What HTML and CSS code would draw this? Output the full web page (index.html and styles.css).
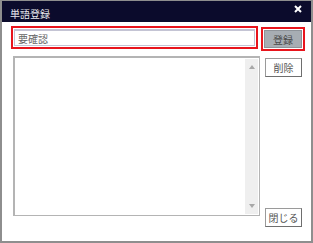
FILE: index.html
```html
<!DOCTYPE html>
<html lang="ja">
<head>
  <meta charset="UTF-8">
  <title>単語登録</title>
  <link rel="stylesheet" href="styles.css">
</head>
<body>
  <div class="window">
    <div class="titlebar">
      <span class="title">単語登録</span>
      <svg class="close-x" width="8" height="8" viewBox="0 0 8 8">
        <path d="M1 1 L7 7 M7 1 L1 7" stroke="#fff" stroke-width="2"/>
      </svg>
    </div>
    <div class="content">
      <div class="top-row">
        <div class="field-wrap">
          <div class="field">要確認</div>
        </div>
        <div class="btn-wrap">
          <button class="btn btn-register">登録</button>
        </div>
      </div>
      <div class="main-row">
        <div class="listbox">
          <div class="list-area"></div>
          <div class="scrollbar">
            <span class="arrow up"></span>
            <span class="arrow down"></span>
          </div>
        </div>
        <div class="side">
          <button class="btn">削除</button>
          <button class="btn">閉じる</button>
        </div>
      </div>
    </div>
  </div>
</body>
</html>
```

FILE: styles.css
```css
/* Dialog window */
body {
  margin: 0;
  background: #fff;
  font-family: "Noto Sans CJK JP", "Noto Sans", sans-serif;
}

.window {
  width: 313px;
  height: 243px;
  box-sizing: border-box;
  border: 2px solid #8e8e8e;
  border-top-width: 1px;
  background: #fff;
  display: flex;
  flex-direction: column;
}

.titlebar {
  height: 21px;
  background: #0b0b2c;
  display: flex;
  align-items: center;
  justify-content: space-between;
  padding: 0 9px 0 8px;
  flex-shrink: 0;
}

.title {
  color: #e8e8ee;
  font-size: 10px;
  margin-top: 4px;
}

.close-x {
  margin-top: -6px;
}

.content {
  padding: 4px 0 0 9px;
}

.top-row {
  display: flex;
  align-items: flex-start;
}

.field-wrap {
  width: 247px;
  height: 23px;
  box-sizing: border-box;
  border: 2px solid #e8141c;
  padding: 1px;
}

.field {
  height: 100%;
  box-sizing: border-box;
  border: 1px solid #c4c4d4;
  border-top-width: 2px;
  font-size: 10px;
  line-height: 15px;
  color: #666;
  padding-left: 3px;
}

.btn-wrap {
  width: 44px;
  height: 24px;
  box-sizing: border-box;
  margin: 1px 0 0 3px;
  border: 2px solid #e8141c;
  padding: 1px;
}

.btn {
  font-family: "Noto Sans CJK JP", "Noto Sans", sans-serif;
  font-size: 10px;
  color: #555;
  background: #fff;
  border: 1px solid #9a9a9a;
  border-right-color: #6e6e6e;
  border-bottom-color: #6e6e6e;
  width: 37px;
  height: 19px;
  padding: 0;
  display: flex;
  align-items: center;
  justify-content: center;
}

.btn-register {
  width: 100%;
  height: 100%;
  background: #a7adb3;
  border-color: #8d9298;
  color: #4a4a4a;
}

.main-row {
  display: flex;
  margin-top: 5px;
}

.listbox {
  width: 247px;
  height: 160px;
  box-sizing: border-box;
  margin-left: 2px;
  border: 1px solid #b4b4b4;
  border-left-width: 2px;
  border-top-width: 2px;
  display: flex;
}

.list-area {
  flex: 1;
}

.scrollbar {
  width: 13px;
  margin: 1px 1px 1px 0;
  background: #efefef;
  display: flex;
  flex-direction: column;
  justify-content: space-between;
  align-items: center;
  padding: 6px 0;
}

.arrow {
  width: 0;
  height: 0;
  border-left: 3px solid transparent;
  border-right: 3px solid transparent;
}

.arrow.up {
  border-bottom: 4px solid #a8a8a8;
}

.arrow.down {
  border-top: 4px solid #a8a8a8;
}

.side {
  margin: 2px 0 0 5px;
  height: 169px;
  display: flex;
  flex-direction: column;
  justify-content: space-between;
}
```
